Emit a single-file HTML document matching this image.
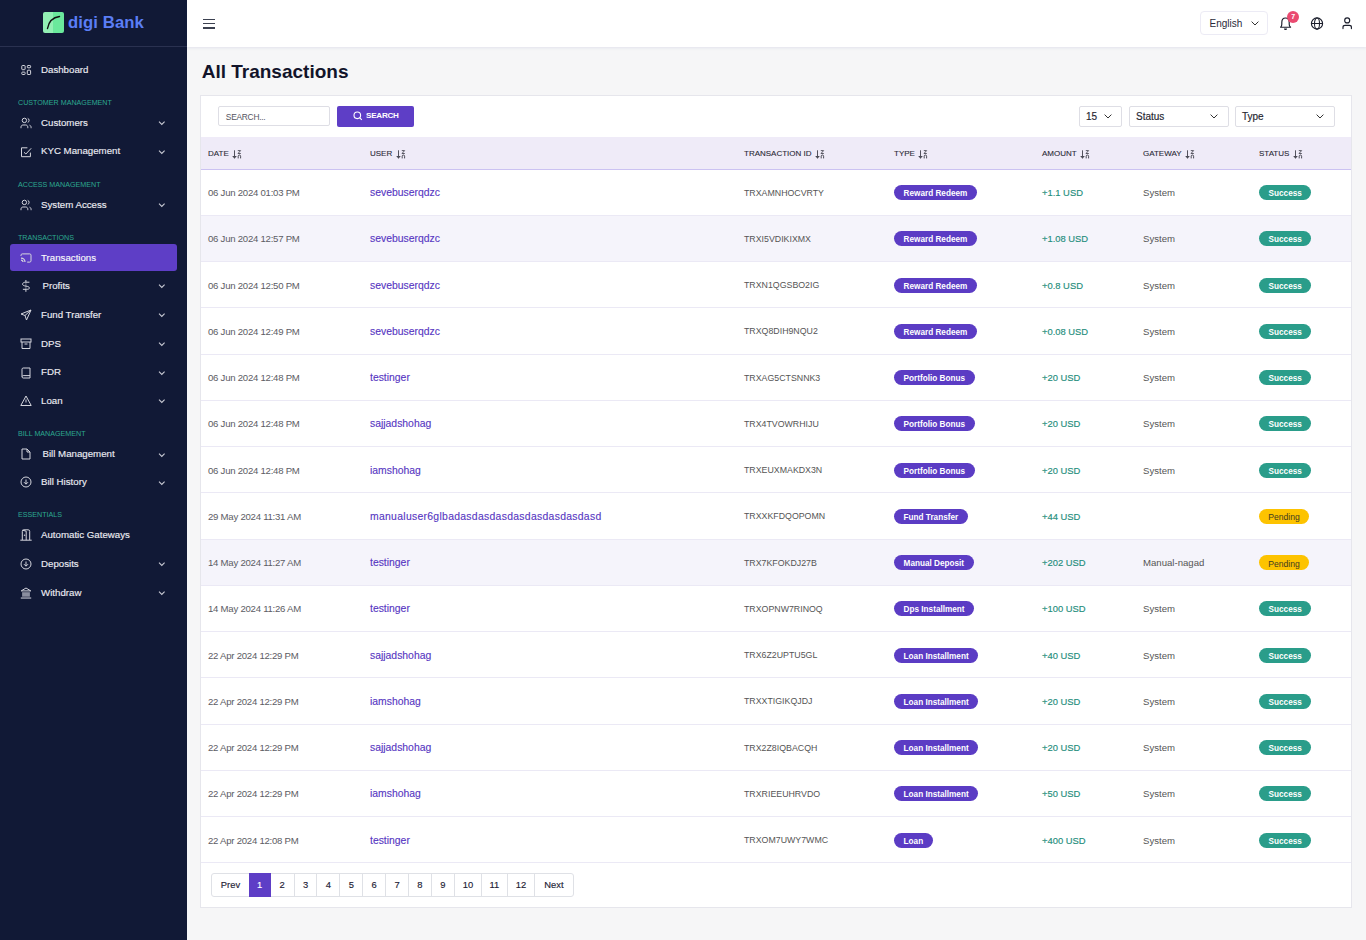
<!DOCTYPE html>
<html><head><meta charset="utf-8"><title>All Transactions</title>
<style>
*{box-sizing:border-box;margin:0;padding:0}
html,body{width:1366px;height:940px;overflow:hidden}
body{font-family:"Liberation Sans",sans-serif;background:#f6f6f7;position:relative;color:#333}
.sidebar{position:absolute;left:0;top:0;width:187px;height:940px;background:#111936}
.sidebar .logo{position:absolute;left:0;top:0;width:187px;height:47px;border-bottom:1px solid #2a3150}
.lsq{position:absolute;left:43px;top:12px;width:21px;height:21px;border-radius:2px;background:linear-gradient(90deg,#92f0b4 0,#92f0b4 50%,#6ae99c 50%,#6ae99c 100%)}
.ltx{position:absolute;left:68px;top:11px;font-size:16.7px;font-weight:bold;color:#5b7ef5;line-height:24px;letter-spacing:0.1px}
.sec{position:absolute;left:18px;font-size:7.15px;line-height:12px;margin-top:0.7px;color:#2ca88f;white-space:nowrap}
.sitem{position:absolute;font-size:9.7px;line-height:20px;color:#ebebf2;white-space:nowrap;-webkit-text-stroke:0.15px #ebebf2}
.sitem.act{color:#fff}
.activebg{position:absolute;left:10px;top:244px;width:167px;height:27px;background:#5e3ec6;border-radius:3px}
.sico{position:absolute;left:20px;fill:none;stroke:#d5d6de;stroke-width:1;color:#d5d6de}
.chev{position:absolute;left:157.6px;fill:none;stroke:#c9cad4;stroke-width:1.1}
.topbar{position:absolute;left:187px;top:0;width:1179px;height:47px;background:#fff;border-left:1px solid #fff;box-shadow:0 1px 3px rgba(50,60,150,0.1)}
.ham{position:absolute;left:15px;top:18.5px;width:12px;height:10px}
.ham i{position:absolute;left:0;width:12px;height:1.6px;background:#3c4150}
.lang{position:absolute;left:1012px;top:11px;width:68px;height:24px;border:1px solid #ecebf5;border-radius:4px;font-size:10px;line-height:23.4px;padding-left:8.5px;color:#2a2a3a}
.title{position:absolute;left:201.7px;top:58.7px;font-size:19px;font-weight:bold;color:#12142a;line-height:26px}
.card{position:absolute;left:200px;top:95px;width:1152px;height:813px;background:#fff;border:1px solid #e6e6ec}
.sinput{position:absolute;left:17px;top:10.4px;width:112px;height:19.4px;border:1px solid #dedee5;border-radius:2px;font-size:8.4px;letter-spacing:-0.25px;line-height:21px;padding-left:6.8px;color:#55555f}
.sbtn{position:absolute;left:136px;top:10px;width:77px;height:21px;background:#5e3ec6;border-radius:2px;color:#fff;font-size:8.1px;letter-spacing:-0.25px;font-weight:bold;line-height:19px;padding-left:29px}
.sel{position:absolute;top:10px;height:21px;border:1px solid #dedee5;border-radius:2px;font-size:10px;line-height:19px;padding-left:6px;color:#252530;-webkit-text-stroke:0.15px #252530}
table{position:absolute;left:0;top:41px;width:1150px;border-collapse:collapse;table-layout:fixed}
thead tr{background:#efebf8;height:32px}
th{font-size:8px;font-weight:normal;text-align:left;padding-left:7px;padding-top:2px;color:#2a2a36;-webkit-text-stroke:0.1px #2a2a36;border-bottom:1px solid #cbc2f2;white-space:nowrap}
td{font-size:9px;padding-left:7px;padding-top:1px;height:46.25px;border-bottom:1px solid #ebe9f5;white-space:nowrap;color:#555}
tr.hl td{background:#f5f4fb}
.us{color:#5636c2;font-size:10.4px;-webkit-text-stroke:0.12px #5636c2}
.us.long{letter-spacing:0.3px}
.dt{font-size:9.6px;letter-spacing:-0.25px;color:#5c5c64}
.tx{font-size:8.8px}
.gw{font-size:9.6px}
.am{color:#1f8e7c;font-size:9.4px;-webkit-text-stroke:0.15px #1f8e7c}
.badge{display:inline-block;background:#5b3cc4;color:#fff;font-size:8.2px;font-weight:bold;line-height:15px;height:15px;padding:0.9px 9.6px 0;border-radius:8px;vertical-align:middle}
.st{display:inline-block;color:#fff;font-size:8.2px;font-weight:bold;line-height:15px;height:15px;padding:0.9px 9.6px 0;border-radius:8px;vertical-align:middle}
.succ{background:#2a9d8a}
.pend{background:#fdc300;color:#3f3b22;font-weight:normal;font-size:8.6px;padding:1.5px 9.2px 0}
.sort{vertical-align:middle;margin-left:3.4px;position:relative;top:1.3px}
.pag{position:absolute;left:10.3px;top:777px;height:24px;display:flex;border:1px solid #dfe1e6;border-radius:3px}
.pag span{display:block;font-size:9.4px;line-height:21.6px;text-align:center;border-left:1px solid #dfe1e6;color:#1e2235;-webkit-text-stroke:0.15px #1e2235}
.pag span:first-child{border-left:none}
.pag span.on{background:#5e3ec6;color:#fff;-webkit-text-stroke:0.15px #fff;border-left:none;margin:-1px 0;line-height:23.2px}
.pag span.on + span{border-left:none}
</style></head><body>
<div class="sidebar">
<div class="logo"><div class="lsq"><svg width="21" height="21" viewBox="0 0 21 21"><path d="M4.5 16.5C5.5 10.5 9.5 5.5 16.5 4.5" fill="none" stroke="#111" stroke-width="1.4" stroke-linecap="round"/></svg></div><div class="ltx">digi Bank</div></div>
<svg class="sico" style="top:64.9px;left:20.8px" width="12" height="12" viewBox="0 0 12 12"><rect x="0.8" y="0.5" width="3.3" height="4.2" rx="0.7"/><rect x="6.3" y="0.5" width="3.3" height="2.3" rx="0.7"/><rect x="0.8" y="7.1" width="3.3" height="2.4" rx="0.7"/><rect x="6.3" y="5.2" width="3.3" height="4.3" rx="0.7"/></svg>
<div class="sitem" style="top:59.6px;left:41px">Dashboard</div>
<div class="sec" style="top:96.3px">CUSTOMER MANAGEMENT</div>
<svg class="sico" style="top:117.0px;left:20px" width="12" height="12" viewBox="0 0 12 12"><circle cx="4.4" cy="3.4" r="2.2"/><path d="M1 11.2V10.2C1 8.8 1.9 8 3.1 8H5.7C6.9 8 7.8 8.8 7.8 10.2V11.2"/><path d="M7.7 1.3C8.6 1.6 9.1 2.4 9.1 3.4S8.6 5.1 7.7 5.5"/><path d="M9.6 8.1C10.5 8.5 11.1 9.3 11.1 10.5V11.2"/></svg>
<div class="sitem" style="top:112.5px;left:41px">Customers</div>
<svg class="chev" style="top:121.2px" width="8" height="5" viewBox="0 0 8 5"><path d="M1 0.7L3.8 3.5L6.6 0.7"/></svg>
<svg class="sico" style="top:145.8px;left:20px" width="12" height="12" viewBox="0 0 12 12"><path d="M10.4 6.6V10.7H1.5V1.8H7.4"/><path d="M4 6.3L5.9 8L11.2 2.3"/></svg>
<div class="sitem" style="top:141.3px;left:41px">KYC Management</div>
<svg class="chev" style="top:150.0px" width="8" height="5" viewBox="0 0 8 5"><path d="M1 0.7L3.8 3.5L6.6 0.7"/></svg>
<div class="sec" style="top:178.5px">ACCESS MANAGEMENT</div>
<svg class="sico" style="top:199.2px;left:20px" width="12" height="12" viewBox="0 0 12 12"><circle cx="4.4" cy="3.4" r="2.2"/><path d="M1 11.2V10.2C1 8.8 1.9 8 3.1 8H5.7C6.9 8 7.8 8.8 7.8 10.2V11.2"/><path d="M7.7 1.3C8.6 1.6 9.1 2.4 9.1 3.4S8.6 5.1 7.7 5.5"/><path d="M9.6 8.1C10.5 8.5 11.1 9.3 11.1 10.5V11.2"/></svg>
<div class="sitem" style="top:194.7px;left:41px">System Access</div>
<svg class="chev" style="top:203.4px" width="8" height="5" viewBox="0 0 8 5"><path d="M1 0.7L3.8 3.5L6.6 0.7"/></svg>
<div class="sec" style="top:231.4px">TRANSACTIONS</div>
<div class="activebg"></div>
<svg class="sico" style="top:252.0px;left:20px" width="12" height="12" viewBox="0 0 12 12"><path d="M1 4V3.1C1 2.4 1.5 1.9 2.2 1.9h7.6c0.7 0 1.2 0.5 1.2 1.2v5.8c0 0.7-0.5 1.2-1.2 1.2H7.2"/><path d="M1 6.1a4 4 0 0 1 4 4" stroke-width="1.2"/><path d="M1 8.1a2 2 0 0 1 2 2" stroke-width="1.2"/></svg>
<div class="sitem act" style="top:247.5px;left:41px">Transactions</div>
<svg class="sico" style="top:280.2px;left:20px" width="12" height="12" viewBox="0 0 12 12"><path d="M9.4 2.2H5.4C3.7 2.2 2.6 3 2.6 4.2C2.6 5.4 3.9 5.8 5.9 6.1C7.9 6.4 9.4 6.9 9.4 8C9.4 9 8.3 9.3 6.6 9.3H2.9"/><path d="M5.9 -0.2V2.2M5.9 9.3V11.8"/><path d="M5.9 2.2V9.3" stroke-opacity="0.45"/></svg>
<div class="sitem" style="top:275.7px;left:42.5px">Profits</div>
<svg class="chev" style="top:284.4px" width="8" height="5" viewBox="0 0 8 5"><path d="M1 0.7L3.8 3.5L6.6 0.7"/></svg>
<svg class="sico" style="top:309.0px;left:20px" width="12" height="12" viewBox="0 0 12 12"><path d="M11 1L1 5l4 1.5L6.5 11z"/><path d="M11 1L5 6.5"/></svg>
<div class="sitem" style="top:304.5px;left:41px">Fund Transfer</div>
<svg class="chev" style="top:313.2px" width="8" height="5" viewBox="0 0 8 5"><path d="M1 0.7L3.8 3.5L6.6 0.7"/></svg>
<svg class="sico" style="top:338.1px;left:20px" width="12" height="12" viewBox="0 0 12 12"><rect x="1" y="1" width="10" height="3"/><path d="M2 4v6.5h8V4"/><path d="M4.5 6h3"/></svg>
<div class="sitem" style="top:333.6px;left:41px">DPS</div>
<svg class="chev" style="top:342.3px" width="8" height="5" viewBox="0 0 8 5"><path d="M1 0.7L3.8 3.5L6.6 0.7"/></svg>
<svg class="sico" style="top:366.5px;left:20px" width="12" height="12" viewBox="0 0 12 12"><path d="M2 9.5V2.2C2 1.5 2.5 1 3.2 1H10v10H3.2C2.5 11 2 10.5 2 9.8c0-0.7 0.5-1.2 1.2-1.2H10"/></svg>
<div class="sitem" style="top:362.0px;left:41px">FDR</div>
<svg class="chev" style="top:370.7px" width="8" height="5" viewBox="0 0 8 5"><path d="M1 0.7L3.8 3.5L6.6 0.7"/></svg>
<svg class="sico" style="top:395.0px;left:20px" width="12" height="12" viewBox="0 0 12 12"><path d="M6 1L0.8 10.5h10.4z"/><path d="M6 4.5v3"/><path d="M6 9v0.2"/></svg>
<div class="sitem" style="top:390.5px;left:41px">Loan</div>
<svg class="chev" style="top:399.2px" width="8" height="5" viewBox="0 0 8 5"><path d="M1 0.7L3.8 3.5L6.6 0.7"/></svg>
<div class="sec" style="top:427.6px">BILL MANAGEMENT</div>
<svg class="sico" style="top:448.4px;left:20px" width="12" height="12" viewBox="0 0 12 12"><path d="M2 1h5l3 3v7H2z"/><path d="M7 1v3h3"/></svg>
<div class="sitem" style="top:443.9px;left:42.5px">Bill Management</div>
<svg class="chev" style="top:452.6px" width="8" height="5" viewBox="0 0 8 5"><path d="M1 0.7L3.8 3.5L6.6 0.7"/></svg>
<svg class="sico" style="top:476.4px;left:20px" width="12" height="12" viewBox="0 0 12 12"><circle cx="6" cy="6" r="5"/><path d="M6 3.5v4.5"/><path d="M4 6.2l2 2 2-2"/></svg>
<div class="sitem" style="top:471.9px;left:41px">Bill History</div>
<svg class="chev" style="top:480.6px" width="8" height="5" viewBox="0 0 8 5"><path d="M1 0.7L3.8 3.5L6.6 0.7"/></svg>
<div class="sec" style="top:508.4px">ESSENTIALS</div>
<svg class="sico" style="top:529.2px;left:20px" width="12" height="12" viewBox="0 0 12 12"><path d="M0.3 11.2h11.4"/><path d="M2.3 11V2.3Q2.3 0.8 3.8 0.8H8.2Q9.7 0.8 9.7 2.3V11"/><path d="M2.6 1.2L6.2 2.2V11.2"/><circle cx="4.6" cy="6.2" r="0.35" fill="currentColor"/></svg>
<div class="sitem" style="top:524.7px;left:41px">Automatic Gateways</div>
<svg class="sico" style="top:558.2px;left:20px" width="12" height="12" viewBox="0 0 12 12"><circle cx="6" cy="6" r="5"/><path d="M6 3.5v4.5"/><path d="M4 6.2l2 2 2-2"/></svg>
<div class="sitem" style="top:553.7px;left:41px">Deposits</div>
<svg class="chev" style="top:562.4px" width="8" height="5" viewBox="0 0 8 5"><path d="M1 0.7L3.8 3.5L6.6 0.7"/></svg>
<svg class="sico" style="top:587.0px;left:20px" width="12" height="12" viewBox="0 0 12 12"><path d="M1.2 3.9L6 1L10.8 3.9Z" stroke-linejoin="round"/><rect x="2.1" y="5.2" width="7.8" height="4.5" fill="#8a8ea0" stroke="none"/><rect x="0.8" y="10.2" width="10.4" height="1.7" fill="#8a8ea0" stroke="none"/></svg>
<div class="sitem" style="top:582.5px;left:41px">Withdraw</div>
<svg class="chev" style="top:591.2px" width="8" height="5" viewBox="0 0 8 5"><path d="M1 0.7L3.8 3.5L6.6 0.7"/></svg>
</div>
<div class="topbar">
<div class="ham"><i style="top:0"></i><i style="top:4.3px"></i><i style="top:8.6px"></i></div>
<div class="lang">English<svg style="position:absolute;left:49.6px;top:8.8px" width="8" height="5" viewBox="0 0 8 5"><path d="M0.6 0.6L4 4L7.4 0.6" fill="none" stroke="#333" stroke-width="1"/></svg></div>
<svg style="position:absolute;left:1091.2px;top:16.5px" width="13" height="14" viewBox="0 0 13 14"><path d="M1.6 10.2C2.6 9.5 2.8 8.6 2.8 7.2V5.4C2.8 2.8 4.3 1 6.5 1S10.2 2.8 10.2 5.4V7.2C10.2 8.6 10.4 9.5 11.6 10.2Z" fill="none" stroke="#1a1d2b" stroke-width="1.15" stroke-linejoin="round"/><path d="M5 11.4h3C8 12.4 7.3 13 6.5 13S5 12.4 5 11.4z" fill="#1a1d2b"/></svg>
<div style="position:absolute;left:1099.2px;top:11px;width:12px;height:12px;border-radius:6px;background:#ea4a70;color:#fff;font-size:7px;font-weight:bold;text-align:center;line-height:12px">7</div>
<svg style="position:absolute;left:1122.2px;top:17px" width="14" height="14" viewBox="0 0 14 14"><circle cx="7" cy="6.5" r="5.6" fill="none" stroke="#1a1d2b" stroke-width="1.15"/><ellipse cx="7" cy="6.5" rx="2.5" ry="5.6" fill="none" stroke="#1a1d2b" stroke-width="1.05"/><path d="M1.4 6.5h11.2" stroke="#1a1d2b" stroke-width="1.05"/></svg>
<svg style="position:absolute;left:1154px;top:16.8px" width="12" height="13" viewBox="0 0 12 13"><circle cx="5.2" cy="3.4" r="2.5" fill="none" stroke="#1a1d2b" stroke-width="1.15"/><path d="M1 11.6V10.2C1 9 1.9 8.4 3.1 8.4H7.3C8.5 8.4 9.4 9 9.4 10.2V11.6" fill="none" stroke="#1a1d2b" stroke-width="1.15" stroke-linecap="round"/></svg>
</div>
<div class="title">All Transactions</div>
<div class="card">
<div class="sinput">SEARCH...</div>
<div class="sbtn"><svg style="position:absolute;left:16px;top:5.3px" width="10" height="10" viewBox="0 0 10 10"><circle cx="4.3" cy="4.3" r="3.3" fill="none" stroke="#fff" stroke-width="1.1"/><path d="M6.8 6.8L8.8 8.8" stroke="#fff" stroke-width="1.1"/></svg>SEARCH</div>
<div class="sel" style="left:878px;width:43px">15<svg style="position:absolute;left:24.4px;top:7.2px" width="8" height="5" viewBox="0 0 8 5"><path d="M0.6 0.6L4 4L7.4 0.6" fill="none" stroke="#333" stroke-width="1"/></svg></div>
<div class="sel" style="left:928px;width:100px">Status<svg style="position:absolute;left:80.4px;top:7.2px" width="8" height="5" viewBox="0 0 8 5"><path d="M0.6 0.6L4 4L7.4 0.6" fill="none" stroke="#333" stroke-width="1"/></svg></div>
<div class="sel" style="left:1034px;width:100px">Type<svg style="position:absolute;left:80.4px;top:7.2px" width="8" height="5" viewBox="0 0 8 5"><path d="M0.6 0.6L4 4L7.4 0.6" fill="none" stroke="#333" stroke-width="1"/></svg></div>
<table>
<colgroup><col style="width:162px"><col style="width:374px"><col style="width:150px"><col style="width:148px"><col style="width:101px"><col style="width:116px"><col style="width:99px"></colgroup>
<thead><tr><th>DATE<svg class="sort" width="10" height="10" viewBox="0 0 10 10"><path d="M2.5 0.3v7.8" stroke="#4a4a55" stroke-width="0.95" fill="none"/><path d="M0.2 6.1L2.5 8.7 4.8 6.1z" fill="#4a4a55"/><path d="M5.8 0.6h2.8L6 3.5h2.8" stroke="#4a4a55" stroke-width="0.9" fill="none"/><path d="M6.2 8.4V6.2c0-0.8 0.5-1.2 1.2-1.2s1.2 0.4 1.2 1.2v2.2" stroke="#4a4a55" stroke-width="1" fill="none"/></svg></th><th>USER<svg class="sort" width="10" height="10" viewBox="0 0 10 10"><path d="M2.5 0.3v7.8" stroke="#4a4a55" stroke-width="0.95" fill="none"/><path d="M0.2 6.1L2.5 8.7 4.8 6.1z" fill="#4a4a55"/><path d="M5.8 0.6h2.8L6 3.5h2.8" stroke="#4a4a55" stroke-width="0.9" fill="none"/><path d="M6.2 8.4V6.2c0-0.8 0.5-1.2 1.2-1.2s1.2 0.4 1.2 1.2v2.2" stroke="#4a4a55" stroke-width="1" fill="none"/></svg></th><th>TRANSACTION ID<svg class="sort" width="10" height="10" viewBox="0 0 10 10"><path d="M2.5 0.3v7.8" stroke="#4a4a55" stroke-width="0.95" fill="none"/><path d="M0.2 6.1L2.5 8.7 4.8 6.1z" fill="#4a4a55"/><path d="M5.8 0.6h2.8L6 3.5h2.8" stroke="#4a4a55" stroke-width="0.9" fill="none"/><path d="M6.2 8.4V6.2c0-0.8 0.5-1.2 1.2-1.2s1.2 0.4 1.2 1.2v2.2" stroke="#4a4a55" stroke-width="1" fill="none"/></svg></th><th>TYPE<svg class="sort" width="10" height="10" viewBox="0 0 10 10"><path d="M2.5 0.3v7.8" stroke="#4a4a55" stroke-width="0.95" fill="none"/><path d="M0.2 6.1L2.5 8.7 4.8 6.1z" fill="#4a4a55"/><path d="M5.8 0.6h2.8L6 3.5h2.8" stroke="#4a4a55" stroke-width="0.9" fill="none"/><path d="M6.2 8.4V6.2c0-0.8 0.5-1.2 1.2-1.2s1.2 0.4 1.2 1.2v2.2" stroke="#4a4a55" stroke-width="1" fill="none"/></svg></th><th>AMOUNT<svg class="sort" width="10" height="10" viewBox="0 0 10 10"><path d="M2.5 0.3v7.8" stroke="#4a4a55" stroke-width="0.95" fill="none"/><path d="M0.2 6.1L2.5 8.7 4.8 6.1z" fill="#4a4a55"/><path d="M5.8 0.6h2.8L6 3.5h2.8" stroke="#4a4a55" stroke-width="0.9" fill="none"/><path d="M6.2 8.4V6.2c0-0.8 0.5-1.2 1.2-1.2s1.2 0.4 1.2 1.2v2.2" stroke="#4a4a55" stroke-width="1" fill="none"/></svg></th><th>GATEWAY<svg class="sort" width="10" height="10" viewBox="0 0 10 10"><path d="M2.5 0.3v7.8" stroke="#4a4a55" stroke-width="0.95" fill="none"/><path d="M0.2 6.1L2.5 8.7 4.8 6.1z" fill="#4a4a55"/><path d="M5.8 0.6h2.8L6 3.5h2.8" stroke="#4a4a55" stroke-width="0.9" fill="none"/><path d="M6.2 8.4V6.2c0-0.8 0.5-1.2 1.2-1.2s1.2 0.4 1.2 1.2v2.2" stroke="#4a4a55" stroke-width="1" fill="none"/></svg></th><th>STATUS<svg class="sort" width="10" height="10" viewBox="0 0 10 10"><path d="M2.5 0.3v7.8" stroke="#4a4a55" stroke-width="0.95" fill="none"/><path d="M0.2 6.1L2.5 8.7 4.8 6.1z" fill="#4a4a55"/><path d="M5.8 0.6h2.8L6 3.5h2.8" stroke="#4a4a55" stroke-width="0.9" fill="none"/><path d="M6.2 8.4V6.2c0-0.8 0.5-1.2 1.2-1.2s1.2 0.4 1.2 1.2v2.2" stroke="#4a4a55" stroke-width="1" fill="none"/></svg></th></tr></thead>
<tbody>
<tr><td class="dt">06 Jun 2024 01:03 PM</td><td class="us">sevebuserqdzc</td><td class="tx">TRXAMNHOCVRTY</td><td><span class="badge">Reward Redeem</span></td><td class="am">+1.1 USD</td><td class="gw">System</td><td><span class="st succ">Success</span></td></tr>
<tr class="hl"><td class="dt">06 Jun 2024 12:57 PM</td><td class="us">sevebuserqdzc</td><td class="tx">TRXI5VDIKIXMX</td><td><span class="badge">Reward Redeem</span></td><td class="am">+1.08 USD</td><td class="gw">System</td><td><span class="st succ">Success</span></td></tr>
<tr><td class="dt">06 Jun 2024 12:50 PM</td><td class="us">sevebuserqdzc</td><td class="tx">TRXN1QGSBO2IG</td><td><span class="badge">Reward Redeem</span></td><td class="am">+0.8 USD</td><td class="gw">System</td><td><span class="st succ">Success</span></td></tr>
<tr><td class="dt">06 Jun 2024 12:49 PM</td><td class="us">sevebuserqdzc</td><td class="tx">TRXQ8DIH9NQU2</td><td><span class="badge">Reward Redeem</span></td><td class="am">+0.08 USD</td><td class="gw">System</td><td><span class="st succ">Success</span></td></tr>
<tr><td class="dt">06 Jun 2024 12:48 PM</td><td class="us">testinger</td><td class="tx">TRXAG5CTSNNK3</td><td><span class="badge">Portfolio Bonus</span></td><td class="am">+20 USD</td><td class="gw">System</td><td><span class="st succ">Success</span></td></tr>
<tr><td class="dt">06 Jun 2024 12:48 PM</td><td class="us">sajjadshohag</td><td class="tx">TRX4TVOWRHIJU</td><td><span class="badge">Portfolio Bonus</span></td><td class="am">+20 USD</td><td class="gw">System</td><td><span class="st succ">Success</span></td></tr>
<tr><td class="dt">06 Jun 2024 12:48 PM</td><td class="us">iamshohag</td><td class="tx">TRXEUXMAKDX3N</td><td><span class="badge">Portfolio Bonus</span></td><td class="am">+20 USD</td><td class="gw">System</td><td><span class="st succ">Success</span></td></tr>
<tr><td class="dt">29 May 2024 11:31 AM</td><td class="us long">manualuser6glbadasdasdasdasdasdasdasdasd</td><td class="tx">TRXXKFDQOPOMN</td><td><span class="badge">Fund Transfer</span></td><td class="am">+44 USD</td><td class="gw"></td><td><span class="st pend">Pending</span></td></tr>
<tr class="hl"><td class="dt">14 May 2024 11:27 AM</td><td class="us">testinger</td><td class="tx">TRX7KFOKDJ27B</td><td><span class="badge">Manual Deposit</span></td><td class="am">+202 USD</td><td class="gw">Manual-nagad</td><td><span class="st pend">Pending</span></td></tr>
<tr><td class="dt">14 May 2024 11:26 AM</td><td class="us">testinger</td><td class="tx">TRXOPNW7RINOQ</td><td><span class="badge">Dps Installment</span></td><td class="am">+100 USD</td><td class="gw">System</td><td><span class="st succ">Success</span></td></tr>
<tr><td class="dt">22 Apr 2024 12:29 PM</td><td class="us">sajjadshohag</td><td class="tx">TRX6Z2UPTU5GL</td><td><span class="badge">Loan Installment</span></td><td class="am">+40 USD</td><td class="gw">System</td><td><span class="st succ">Success</span></td></tr>
<tr><td class="dt">22 Apr 2024 12:29 PM</td><td class="us">iamshohag</td><td class="tx">TRXXTIGIKQJDJ</td><td><span class="badge">Loan Installment</span></td><td class="am">+20 USD</td><td class="gw">System</td><td><span class="st succ">Success</span></td></tr>
<tr><td class="dt">22 Apr 2024 12:29 PM</td><td class="us">sajjadshohag</td><td class="tx">TRX2Z8IQBACQH</td><td><span class="badge">Loan Installment</span></td><td class="am">+20 USD</td><td class="gw">System</td><td><span class="st succ">Success</span></td></tr>
<tr><td class="dt">22 Apr 2024 12:29 PM</td><td class="us">iamshohag</td><td class="tx">TRXRIEEUHRVDO</td><td><span class="badge">Loan Installment</span></td><td class="am">+50 USD</td><td class="gw">System</td><td><span class="st succ">Success</span></td></tr>
<tr><td class="dt">22 Apr 2024 12:08 PM</td><td class="us">testinger</td><td class="tx">TRXOM7UWY7WMC</td><td><span class="badge">Loan</span></td><td class="am">+400 USD</td><td class="gw">System</td><td><span class="st succ">Success</span></td></tr>
</tbody></table>
<div class="pag"><span style="width:36.4px">Prev</span><span class="on" style="width:22px">1</span><span style="width:22.9px">2</span><span style="width:22.9px">3</span><span style="width:22.9px">4</span><span style="width:22.9px">5</span><span style="width:22.9px">6</span><span style="width:22.9px">7</span><span style="width:22.9px">8</span><span style="width:22.9px">9</span><span style="width:27.3px">10</span><span style="width:25.7px">11</span><span style="width:27.3px">12</span><span style="width:38.8px">Next</span></div>
</div>
</body></html>
